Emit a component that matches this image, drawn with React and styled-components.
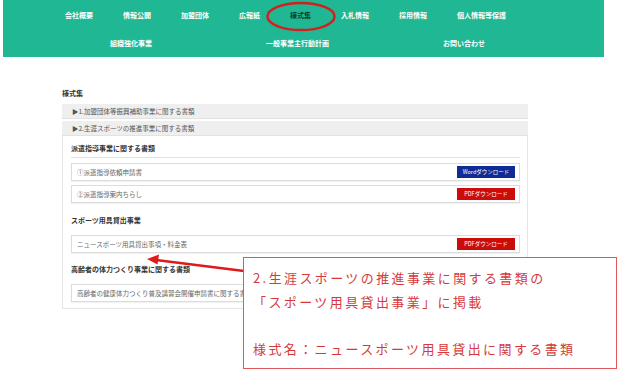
import React from 'react';
import styled, { createGlobalStyle } from 'styled-components';

const GlobalStyle = createGlobalStyle`
  html, body {
    margin: 0;
    padding: 0;
    background: #fff;
  }
  body {
    font-family: "Noto Sans CJK JP", "Noto Sans", sans-serif;
  }
`;

const Page = styled.div`
  position: relative;
  width: 639px;
  height: 386px;
  overflow: hidden;
`;

const Header = styled.header`
  position: relative;
  margin-left: 3px;
  width: 601px;
  height: 57px;
  background: #1fb794;
  display: flex;
  flex-direction: column;
  justify-content: space-between;
  padding: 11px 0 10px;
  box-sizing: border-box;
`;

const NavRow = styled.nav`
  display: flex;
  gap: ${(p) => p.$gap}px;
  padding-left: ${(p) => p.$left}px;
`;

const NavItem = styled.a`
  font-size: 7px;
  line-height: 8px;
  font-weight: 700;
  color: ${(p) => (p.$active ? '#0e3b2e' : '#fff')};
  white-space: nowrap;
  text-decoration: none;
`;

const Ellipse = styled.svg`
  position: absolute;
  left: 262px;
  top: 1px;
`;

const Main = styled.main`
  padding: 31px 0 0 62px;
  width: 466px;
`;

const PageTitle = styled.h2`
  margin: 0 0 6px;
  font-size: 7px;
  line-height: 10px;
  font-weight: 700;
  color: #333;
`;

const AccHeader = styled.div`
  height: 15px;
  margin-bottom: 2px;
  background: #efefef;
  border-bottom: 1px solid #e2e2e2;
  box-sizing: border-box;
  display: flex;
  align-items: center;
  padding-left: 10px;
  font-size: 6.5px;
  color: #555;
`;

const AccBody = styled.div`
  margin-top: -2px;
  border: 1px solid #e6e6e6;
  border-top: none;
  padding: 6px 7px 6px 8px;
`;

const Section = styled.div`
  margin-top: ${(p) => p.$top}px;
`;

const SectionTitle = styled.h3`
  margin: 0;
  padding: 1px 0 4px;
  font-size: 7px;
  line-height: 10px;
  font-weight: 700;
  color: #333;
  border-bottom: ${(p) => (p.$line ? '1px solid #e3e3e3' : 'none')};
  margin-bottom: ${(p) => (p.$line ? 5 : 6)}px;
`;

const FileList = styled.div`
  display: flex;
  flex-direction: column;
  gap: 4px;
`;

const FileRow = styled.div`
  height: 18px;
  border: 1px solid #dcdcdc;
  box-shadow: 0 1px 1px rgba(0, 0, 0, 0.05);
  box-sizing: border-box;
  display: flex;
  align-items: center;
  justify-content: space-between;
  padding: 0 4px 0 5px;
  font-size: 6.5px;
  color: #666;
  white-space: nowrap;
  overflow: hidden;
`;

const Download = styled.span`
  width: 58px;
  height: 12px;
  flex: none;
  display: flex;
  align-items: center;
  justify-content: center;
  font-size: 5.5px;
  color: #fff;
  background: ${(p) => (p.$kind === 'word' ? '#102b96' : '#cc0b0b')};
`;

const Callout = styled.div`
  position: absolute;
  left: 243px;
  top: 257px;
  width: 374px;
  height: 112px;
  box-sizing: border-box;
  border: 1px solid #e0585a;
  background: #fff;
  padding: 8px 0 0 9px;
  color: #d7393b;
  font-size: 13px;
  line-height: 23.5px;
  letter-spacing: 2.4px;
  white-space: nowrap;
`;

const Arrow = styled.svg`
  position: absolute;
  left: 140px;
  top: 250px;
`;

const nav1 = ['会社概要', '情報公開', '加盟団体', '広報紙', '様式集', '入札情報', '採用情報', '個人情報等保護'];
const nav2 = ['組織強化事業', '一般事業主行動計画', 'お問い合わせ'];

export default function App() {
  return (
    <Page>
      <GlobalStyle />
      <Header>
        <NavRow $left={62} $gap={30}>
          {nav1.map((t) => (
            <NavItem key={t} $active={t === '様式集'}>{t}</NavItem>
          ))}
        </NavRow>
        <NavRow $left={107} $gap={114}>
          {nav2.map((t) => (
            <NavItem key={t}>{t}</NavItem>
          ))}
        </NavRow>
        <Ellipse width="74" height="32" viewBox="0 0 74 32">
          <ellipse cx="36" cy="15.5" rx="33.5" ry="13.5" fill="none" stroke="#d3201f" strokeWidth="2.5" />
        </Ellipse>
      </Header>

      <Main>
        <PageTitle>様式集</PageTitle>
        <AccHeader>▶1.加盟団体等振興補助事業に関する書類</AccHeader>
        <AccHeader>▶2.生涯スポーツの推進事業に関する書類</AccHeader>
        <AccBody>
          <Section $top={0}>
            <SectionTitle $line>派遣指導事業に関する書類</SectionTitle>
            <FileList>
              <FileRow>①派遣指導依頼申請書<Download $kind="word">Wordダウンロード</Download></FileRow>
              <FileRow>②派遣指導案内ちらし<Download $kind="pdf">PDFダウンロード</Download></FileRow>
            </FileList>
          </Section>
          <Section $top={11}>
            <SectionTitle>スポーツ用具貸出事業</SectionTitle>
            <FileList>
              <FileRow>ニュースポーツ用具貸出事項・料金表<Download $kind="pdf">PDFダウンロード</Download></FileRow>
            </FileList>
          </Section>
          <Section $top={10}>
            <SectionTitle>高齢者の体力つくり事業に関する書類</SectionTitle>
            <FileList>
              {/* the download button of this row sits under the callout */}
              <FileRow>高齢者の健康体力つくり普及講習会開催申請書に関する書</FileRow>
            </FileList>
          </Section>
        </AccBody>
      </Main>

      <Arrow width="110" height="30" viewBox="0 0 110 30">
        <line x1="104" y1="21" x2="16" y2="10" stroke="#e0191b" strokeWidth="2.5" />
        <polygon points="7,9 19,4.5 17.5,14.5" fill="#e0191b" />
      </Arrow>

      <Callout>
        <div>2.生涯スポーツの推進事業に関する書類の</div>
        <div>「スポーツ用具貸出事業」に掲載</div>
        <div>&nbsp;</div>
        <div>様式名：ニュースポーツ用具貸出に関する書類</div>
      </Callout>
    </Page>
  );
}
